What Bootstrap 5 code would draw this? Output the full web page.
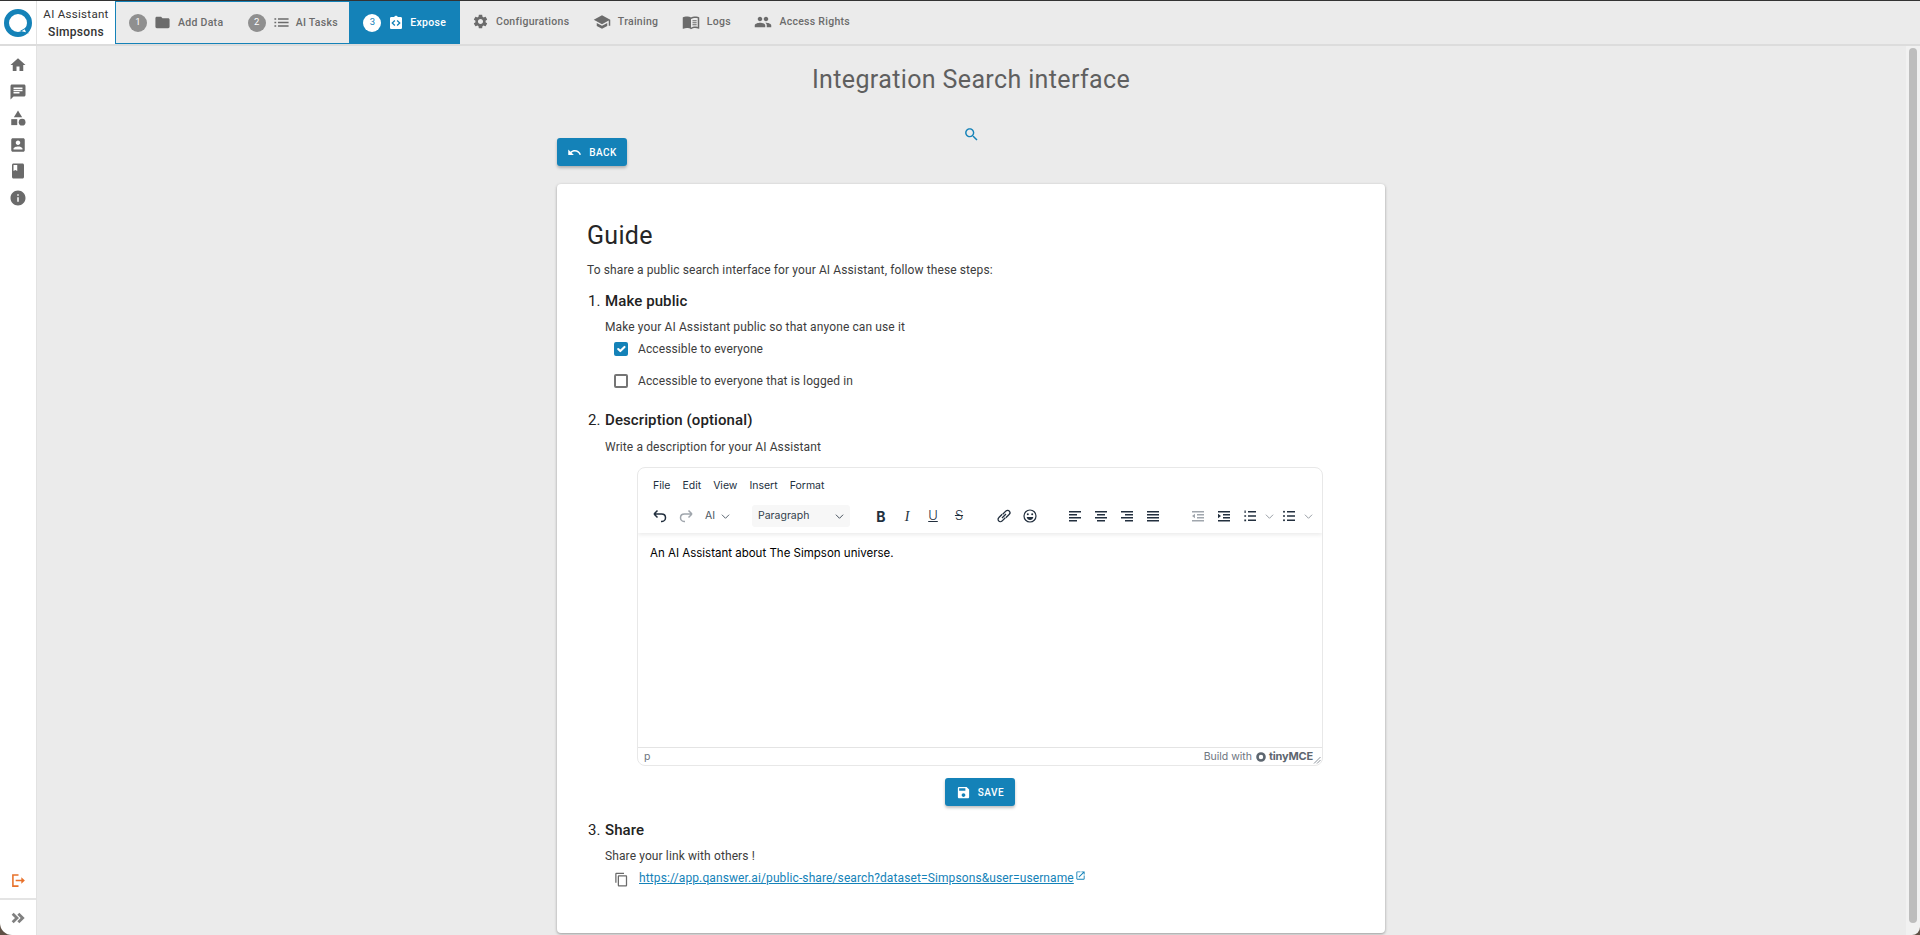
<!DOCTYPE html>
<html lang="en">
<head>
<meta charset="UTF-8">
<title>Integration Search interface</title>
<link href="https://cdn.jsdelivr.net/npm/bootstrap@5.3.2/dist/css/bootstrap.min.css" rel="stylesheet">
<style>
    html, body { height: 100%; overflow: hidden; }
    body { background: #ebebeb; font-family: Roboto, "Liberation Sans", sans-serif; color: #2b2b2b; font-size: 12px; letter-spacing: .11px; }
    .shell { height: 935px; background: #ebebeb; border-top: 1px solid #333; }
    svg { fill: currentColor; flex: none; display: block; }

    .topbar { height: 45px; border-bottom: 2px solid #dcdcdc; background: #ebebeb; color: #6b6b6b; font-size: 10.5px; font-weight: 500; letter-spacing: .28px; }
    .logo-box { width: 37px; background: #fff; border-right: 1px solid #e2e2e2; }
    .name-box { width: 78px; background: #fff; font-size: 11.5px; font-weight: 400; line-height: 18px; color: #333; letter-spacing: .3px; }
    .name-box b { font-weight: 500; font-size: 12px; }
    .stepper { width: 345px; border: 1px solid #1482b8; }
    .step-num { width: 18px; height: 18px; border-radius: 50%; background: #8f8f8f; color: #fff; font-size: 9.5px; font-weight: 400; letter-spacing: 0; }
    .step-a { padding-left: 13px; width: 118px; gap: 7px; }
    .step-b { padding-left: 14px; width: 116px; gap: 6px; }
    .step-b svg { margin-left: 1px; }
    .step-on { width: 111px; padding-left: 14px; gap: 6.5px; background: #1482b8; color: #fff; margin: -1px -1px -1px 0; }
    .step-on .step-num { background: #fff; color: #1482b8; }
    .top-link { gap: 7px; padding-bottom: 2px; }
    .links-box { padding-left: 12px; gap: 23.5px; }

    .side-wrap { background: #5f5045; }
    .sidebar { width: 37px; height: 100%; background: #fff; border-right: 1px solid #e2e2e2; color: #6a6a6a; border-bottom-left-radius: 12px; }
    .side-top { padding-top: 10px; gap: 8.5px; }
    .logout-row { height: 37px; padding-top: 1px; color: #e8712a; }
    .side-foot { height: 37px; border-top: 2px solid #e4e4e4; color: #808080; }

    .main-pane { overflow: hidden; background: #ebebeb; padding-right: 1px; }
    .bar-track { width: 14px; height: 100%; background: #f1f1f1; padding: 2px 3px 12px 3px; border-bottom-right-radius: 8px; }
    .bar-thumb { height: 100%; background: #bdbdbd; border-radius: 4px; }
    .page-title { font-size: 25px; font-weight: 400; line-height: 32px; color: #5f5f5f; letter-spacing: .37px; padding-top: 18px; margin: 0; text-align: center; }
    .search-row { color: #1482b8; height: 20px; margin-top: 30px; }
    .page-col { width: 828px; }
    .act-btn { background: #1482b8; color: #fff; border: 0; border-radius: 3px; height: 28px; font-size: 10px; font-weight: 500; letter-spacing: .5px; box-shadow: 0 2px 3px rgba(0,0,0,.25); padding: 0; gap: 7px; }
    .act-btn:hover { background: #1482b8; color: #fff; }
    .back-btn { width: 70px; margin-top: -8px; }
    .save-btn { width: 70px; }
    .save-row { margin: 12px 0 0 49px; width: 686px; }
    .guide-box { margin-top: 18px; background: #fff; border-radius: 4px; box-shadow: 0 1px 3px rgba(0,0,0,.35); padding: 34px 30px 0; height: 749px; }
    .guide-title { font-size: 25px; line-height: 36px; font-weight: 400; color: #262626; letter-spacing: .3px; margin: 0; }
    .guide-intro { margin: 7px 0 0; line-height: 18px; color: #3c3c3c; }
    .guide-steps { list-style: none; margin: 0; padding: 0 0 0 1px; }
    .step-one { margin-top: 12px; }
    .step-two { margin-top: 20px; }
    .step-three { margin-top: 14px; }
    .step-head { font-size: 15px; line-height: 20px; font-weight: 400; margin: 0; color: #222; letter-spacing: .1px; }
    .step-head b { font-weight: 500; }
    .step-head span { display: inline-block; width: 17px; }
    .step-text { padding-left: 17px; line-height: 18px; margin: 7px 0 0; color: #3c3c3c; }
    .step-two .step-text { margin-top: 8px; }
    .opt-row { padding-left: 26px; gap: 10px; line-height: 18px; color: #3c3c3c; }
    .opt-gap { margin-top: 14px; }
    .form-check-input.opt-box { width: 14px; height: 14px; margin: 0; border: 2px solid #757575; border-radius: 2px; }
    .form-check-input.opt-box:checked { background-color: #1482b8; border-color: #1482b8; background-origin: border-box; background-size: 14px; }

    .editor { margin: 11px 0 0 49px; width: 686px; height: 299px; border: 1px solid #e8e8e8; border-radius: 8px; font-family: Inter, "Liberation Sans", sans-serif; letter-spacing: 0; color: #222f3e; overflow: hidden; }
    .ed-head { box-shadow: 0 2px 4px rgba(0,0,0,.08); height: 65px; position: relative; }
    .ed-menu { padding: 9px 0 0 15px; height: 34px; font-size: 10.5px; gap: 12px; line-height: 18px; }
    .ed-tools { height: 29px; padding-left: 9px; padding-bottom: 1px; font-size: 10.5px; }
    .tool { width: 26px; height: 22px; color: #222f3e; font-size: 14px; }
    .tool-i { font-family: "Liberation Serif", serif; font-style: italic; }
    .tool-u, .tool-s { font-size: 13px; font-weight: 300; }
    .tool-off { color: #a0a6ad; }
    .tool-sm { width: 13px; color: #8d949c; }
    .ed-ai { width: 40px; gap: 6px; padding-left: 6px; color: #4a5561; }
    .ed-block { width: 98px; height: 22px; margin-left: 13px; margin-right: 18px; background: #f7f7f7; border-radius: 3px; padding: 0 6px; color: #333f4c; }
    .ed-gap { width: 19px; }
    .ed-body { flex: 1; padding: 11px 12px; font-size: 11.5px; line-height: 18px; color: #000; }
    .ed-foot { height: 18px; border-top: 1px solid #e4e4e4; color: #6d7580; font-size: 10.5px; padding: 0 9px 0 6px; position: relative; }
    .tiny-mark { font-size: 11px; font-weight: 700; color: #5d6670; letter-spacing: -.2px; margin-left: -1px; }
    .grip { position: absolute; right: 1px; bottom: 1px; }
    .share-row { padding-left: 26px; line-height: 18px; gap: 10px; margin-top: 4px; }
    .share-row a { color: #1482b8; }
    .copy-ic { color: #6a6a6a; margin-top: 3px; }
    .ext-ic { margin-left: 1px; margin-top: 1px; color: #1482b8; }
</style>
</head>
<body>
<svg width="0" height="0" class="position-absolute">
    <defs>
        <symbol id="i-home" viewBox="0 0 24 24"><path d="M10 20v-6h4v6h5v-8h3L12 3 2 12h3v8z"/></symbol>
        <symbol id="i-chat" viewBox="0 0 24 24"><path d="M20 2H4c-1.1 0-1.99.9-1.99 2L2 22l4-4h14c1.1 0 2-.9 2-2V4c0-1.1-.9-2-2-2zM6 9h12v2H6V9zm8 5H6v-2h8v2zm4-6H6V6h12v2z"/></symbol>
        <symbol id="i-cat" viewBox="0 0 24 24"><path d="M12 2l-5.5 9h11z"/><circle cx="17.5" cy="17.5" r="4.5"/><path d="M3 13.5h8v8H3z"/></symbol>
        <symbol id="i-acc" viewBox="0 0 24 24"><path d="M3 5v14c0 1.1.89 2 2 2h14c1.1 0 2-.9 2-2V5c0-1.1-.9-2-2-2H5c-1.11 0-2 .9-2 2zm12 4c0 1.66-1.34 3-3 3s-3-1.34-3-3 1.34-3 3-3 3 1.34 3 3zm-9 8c0-2 4-3.1 6-3.1s6 1.1 6 3.1v1H6v-1z"/></symbol>
        <symbol id="i-book" viewBox="0 0 24 24"><path d="M18 2H6c-1.1 0-2 .9-2 2v16c0 1.1.9 2 2 2h12c1.1 0 2-.9 2-2V4c0-1.1-.9-2-2-2zM6 4h5v8l-2.5-1.5L6 12V4z"/></symbol>
        <symbol id="i-info" viewBox="0 0 24 24"><path d="M12 2C6.48 2 2 6.48 2 12s4.48 10 10 10 10-4.48 10-10S17.52 2 12 2zm1 15h-2v-6h2v6zm0-8h-2V7h2v2z"/></symbol>
        <symbol id="i-folder" viewBox="0 0 24 24"><path d="M10 4H4c-1.1 0-1.99.9-1.99 2L2 18c0 1.1.9 2 2 2h16c1.1 0 2-.9 2-2V8c0-1.1-.9-2-2-2h-8l-2-2z"/></symbol>
        <symbol id="i-list" viewBox="0 0 24 24"><path d="M2 13h2.500v-2H2v2zm0 5h2.500v-2H2v2zm0-10h2.500V6H2v2zm5 5h15v-2H7v2zm0 5h15v-2H7v2zM7 6v2h15V6H7z"/></symbol>
        <symbol id="i-code" viewBox="0 0 24 24"><path fill-rule="evenodd" d="M19 3h-4.18C14.4 1.84 13.3 1 12 1s-2.4.84-2.82 2H5c-1.1 0-2 .9-2 2v14c0 1.1.9 2 2 2h14c1.1 0 2-.9 2-2V5c0-1.1-.9-2-2-2zm-8 12.17-1.41 1.41L5 12l4.59-4.59L11 8.83 7.83 12 11 15.17zm3.41 1.41L13 15.17 16.17 12 13 8.83l1.41-1.42L19 12l-4.59 4.58z"/></symbol>
        <symbol id="i-gear" viewBox="0 0 24 24"><path d="M19.14 12.94c.04-.3.06-.61.06-.94 0-.32-.02-.64-.07-.94l2.03-1.58c.18-.14.23-.41.12-.61l-1.92-3.32c-.12-.22-.37-.29-.59-.22l-2.39.96c-.5-.38-1.03-.7-1.62-.94l-.36-2.54c-.04-.24-.24-.41-.48-.41h-3.84c-.24 0-.43.17-.47.41l-.36 2.54c-.59.24-1.13.57-1.62.94l-2.39-.96c-.22-.08-.47 0-.59.22L2.74 8.87c-.12.21-.08.47.12.61l2.03 1.58c-.05.3-.09.63-.09.94s.02.64.07.94l-2.03 1.58c-.18.14-.23.41-.12.61l1.92 3.32c.12.22.37.29.59.22l2.39-.96c.5.38 1.03.7 1.62.94l.36 2.54c.05.24.24.41.48.41h3.84c.24 0 .44-.17.47-.41l.36-2.54c.59-.24 1.13-.56 1.62-.94l2.39.96c.22.08.47 0 .59-.22l1.92-3.32c.12-.22.07-.47-.12-.61l-2.01-1.58zM12 15.6c-1.98 0-3.6-1.62-3.6-3.6s1.62-3.6 3.6-3.6 3.6 1.62 3.6 3.6-1.62 3.6-3.6 3.6z"/></symbol>
        <symbol id="i-school" viewBox="0 0 24 24"><path d="M5 13.18v4L12 21l7-3.82v-4L12 17l-7-3.82zM12 3L1 9l11 6 9-4.91V17h2V9L12 3z"/></symbol>
        <symbol id="i-manual" viewBox="0 0 24 24"><path d="M21 5c-1.11-.35-2.33-.5-3.5-.5-1.95 0-4.05.4-5.5 1.5-1.45-1.1-3.55-1.5-5.5-1.5S2.45 4.9 1 6v14.65c0 .25.25.5.5.5.1 0 .15-.05.25-.05C3.1 20.45 5.05 20 6.5 20c1.95 0 4.05.4 5.5 1.5 1.35-.85 3.8-1.5 5.5-1.5 1.65 0 3.35.3 4.75 1.05.1.05.15.05.25.05.25 0 .5-.25.5-.5V6c-.6-.45-1.25-.75-2-1zm0 13.5c-1.1-.35-2.3-.5-3.5-.5-1.7 0-4.15.65-5.5 1.5V8c1.35-.85 3.8-1.5 5.5-1.5 1.2 0 2.4.15 3.5.5v11.5z"/><path d="M14 9.5h5.5V11H14zM14 12.2h5.5v1.5H14zM14 14.9h5.5v1.5H14z"/></symbol>
        <symbol id="i-people" viewBox="0 0 24 24"><path d="M16 11c1.66 0 2.99-1.34 2.99-3S17.66 5 16 5c-1.66 0-3 1.34-3 3s1.34 3 3 3zm-8 0c1.66 0 2.99-1.34 2.99-3S9.66 5 8 5C6.34 5 5 6.34 5 8s1.34 3 3 3zm0 2c-2.33 0-7 1.17-7 3.5V19h14v-2.5c0-2.33-4.67-3.5-7-3.5zm8 0c-.29 0-.62.02-.97.05 1.16.84 1.97 1.97 1.97 3.45V19h6v-2.5c0-2.33-4.67-3.5-7-3.5z"/></symbol>
        <symbol id="i-undo" viewBox="0 0 24 24"><path d="M12.5 8c-2.65 0-5.05.99-6.9 2.6L2 7v9h9l-3.62-3.62c1.39-1.16 3.16-1.88 5.12-1.88 3.54 0 6.55 2.31 7.6 5.5l2.37-.78C21.08 11.03 17.15 8 12.5 8z"/></symbol>
        <symbol id="i-save" viewBox="0 0 24 24"><path d="M17 3H5c-1.11 0-2 .9-2 2v14c0 1.1.89 2 2 2h14c1.1 0 2-.9 2-2V7l-4-4zm-5 16c-1.66 0-3-1.34-3-3s1.34-3 3-3 3 1.34 3 3-1.34 3-3 3zm3-10H5V5h10v4z"/></symbol>
        <symbol id="i-search" viewBox="0 0 24 24"><path d="M15.5 14h-.79l-.28-.27C15.41 12.59 16 11.11 16 9.5 16 5.91 13.09 3 9.5 3S3 5.91 3 9.5 5.91 16 9.5 16c1.61 0 3.09-.59 4.23-1.57l.27.28v.79l5 4.99L20.49 19l-4.99-5zm-6 0C7.01 14 5 11.99 5 9.5S7.01 5 9.5 5 14 7.01 14 9.5 11.99 14 9.5 14z"/></symbol>
        <symbol id="i-copy" viewBox="0 0 24 24"><path d="M16 1H4c-1.1 0-2 .9-2 2v14h2V3h12V1zm3 4H8c-1.1 0-2 .9-2 2v14c0 1.1.9 2 2 2h11c1.1 0 2-.9 2-2V7c0-1.1-.9-2-2-2zm0 16H8V7h11v14z"/></symbol>
        <symbol id="i-ext" viewBox="0 0 24 24"><path d="M19 19H5V5h7V3H5c-1.11 0-2 .9-2 2v14c0 1.1.89 2 2 2h14c1.1 0 2-.9 2-2v-7h-2v7zM14 3v2h3.59l-9.83 9.83 1.41 1.41L19 6.41V10h2V3h-7z"/></symbol>
        <symbol id="i-dbl" viewBox="0 0 24 24"><path d="M5.500 4 2.500 7l5 5-5 5 3 3 8-8zM14 4l-3 3 5 5-5 5 3 3 8-8z"/></symbol>
        <symbol id="i-logout" viewBox="0 0 24 24"><path d="M3 3h9v2.200H5.200v13.600H12V21H3z"/><path d="M8 11h8V7.500l5 4.500-5 4.500V13H8z"/></symbol>
        <symbol id="i-chev" viewBox="0 0 10 10"><path d="M1 3l4 4 4-4" fill="none" stroke="currentColor" stroke-width="1"/></symbol>
        <symbol id="t-redo" viewBox="0 0 16 16"><path d="M14 6H6.500C4 6 2.500 7.700 2.500 9.700S4 13.500 6 13.500h1M14 6l-3.500-3.500M14 6l-3.500 3.500" fill="none" stroke="currentColor" stroke-width="1.500"/></symbol>
        <symbol id="t-undo" viewBox="0 0 16 16"><path d="M2 6h7.500C12 6 13.500 7.700 13.500 9.700S12 13.500 10 13.500H9M2 6l3.500-3.500M2 6l3.500 3.500" fill="none" stroke="currentColor" stroke-width="1.500"/></symbol>
        <symbol id="t-link" viewBox="0 0 16 16"><g fill="none" stroke="currentColor" stroke-width="1.300"><path d="M6.200 6.200L2.900 9.500a2.200 2.200 0 0 0 3.100 3.600l3.300-3.300"/><path d="M9.800 9.800l3.300-3.300A2.200 2.200 0 0 0 10 2.900L6.700 6.200"/><path d="M6 10l4-4"/></g></symbol>
        <symbol id="t-emo" viewBox="0 0 16 16"><circle cx="8" cy="8" r="6" fill="none" stroke="currentColor" stroke-width="1.200"/><circle cx="5.800" cy="6.300" r="1"/><circle cx="10.200" cy="6.300" r="1"/><path d="M4.700 9h6.600c-.3 2-1.600 3-3.300 3s-3-1-3.300-3z"/></symbol>
        <symbol id="t-left" viewBox="0 0 16 16"><path d="M2 3h12v1.400H2zM2 6h8v1.400H2zM2 9h12v1.400H2zM2 12h8v1.400H2z"/></symbol>
        <symbol id="t-center" viewBox="0 0 16 16"><path d="M2 3h12v1.400H2zM4 6h8v1.400H4zM2 9h12v1.400H2zM4 12h8v1.400H4z"/></symbol>
        <symbol id="t-right" viewBox="0 0 16 16"><path d="M2 3h12v1.400H2zM6 6h8v1.400H6zM2 9h12v1.400H2zM6 12h8v1.400H6z"/></symbol>
        <symbol id="t-just" viewBox="0 0 16 16"><path d="M2 3h12v1.400H2zM2 6h12v1.400H2zM2 9h12v1.400H2zM2 12h12v1.400H2z"/></symbol>
        <symbol id="t-out" viewBox="0 0 16 16"><path d="M2 3h12v1.400H2zM7 6h7v1.400H7zM7 9h7v1.400H7zM2 12h12v1.400H2zM5 5.700v4.600L2 8z"/></symbol>
        <symbol id="t-in" viewBox="0 0 16 16"><path d="M2 3h12v1.400H2zM7 6h7v1.400H7zM7 9h7v1.400H7zM2 12h12v1.400H2zM2 5.700v4.600L5 8z"/></symbol>
        <symbol id="t-num" viewBox="0 0 16 16"><path d="M6 3h8v1.400H6zM6 7.300h8v1.400H6zM6 11.600h8V13H6zM2.500 2.500h1.200v2.400H2.500zM2.300 7.200h1.800v1.600H2.300zM2.300 11.400h1.800v1.800H2.300z"/></symbol>
        <symbol id="t-bul" viewBox="0 0 16 16"><path d="M6 3h8v1.400H6zM6 7.300h8v1.400H6zM6 11.600h8V13H6z"/><circle cx="3" cy="3.700" r="1"/><circle cx="3" cy="8" r="1"/><circle cx="3" cy="12.300" r="1"/></symbol>
    </defs>
</svg>

<div class="shell d-flex flex-column">
    <header class="topbar d-flex flex-shrink-0">
        <div class="logo-box d-flex align-items-center justify-content-center">
            <svg width="30" height="30" viewBox="0 0 30 30">
                <circle cx="15" cy="15" r="11.500" fill="none" stroke="#1482b8" stroke-width="5"/>
                <path d="M17 23l8.500 2.500-2.500-6z" fill="#1482b8"/>
                <path d="M18.500 23.200l4.500 1-1.300-3z" fill="#fff"/>
            </svg>
        </div>
        <div class="name-box d-flex flex-column align-items-center justify-content-center">
            <span>AI Assistant</span>
            <b>Simpsons</b>
        </div>
        <div class="stepper d-flex">
            <div class="step-a d-flex align-items-center">
                <span class="step-num d-flex align-items-center justify-content-center">1</span>
                <svg width="17" height="17"><use href="#i-folder"/></svg>
                <span>Add Data</span>
            </div>
            <div class="step-b d-flex align-items-center">
                <span class="step-num d-flex align-items-center justify-content-center">2</span>
                <svg width="17" height="17"><use href="#i-list"/></svg>
                <span>AI Tasks</span>
            </div>
            <div class="step-on d-flex align-items-center">
                <span class="step-num d-flex align-items-center justify-content-center">3</span>
                <svg width="16" height="16"><use href="#i-code"/></svg>
                <span>Expose</span>
            </div>
        </div>
        <div class="links-box d-flex align-items-center">
            <div class="top-link d-flex align-items-center"><svg width="17" height="17"><use href="#i-gear"/></svg><span>Configurations</span></div>
            <div class="top-link d-flex align-items-center"><svg width="18" height="18"><use href="#i-school"/></svg><span>Training</span></div>
            <div class="top-link d-flex align-items-center"><svg width="18" height="18"><use href="#i-manual"/></svg><span>Logs</span></div>
            <div class="top-link d-flex align-items-center"><svg width="18" height="18"><use href="#i-people"/></svg><span>Access Rights</span></div>
        </div>
    </header>

    <div class="d-flex flex-grow-1 overflow-hidden">
        <div class="side-wrap flex-shrink-0">
            <aside class="sidebar d-flex flex-column">
                <div class="side-top d-flex flex-column align-items-center flex-grow-1">
                    <svg width="18" height="18"><use href="#i-home"/></svg>
                    <svg width="18" height="18"><use href="#i-chat"/></svg>
                    <svg width="18" height="18"><use href="#i-cat"/></svg>
                    <svg width="18" height="18"><use href="#i-acc"/></svg>
                    <svg width="18" height="18"><use href="#i-book"/></svg>
                    <svg width="18" height="18"><use href="#i-info"/></svg>
                </div>
                <div class="logout-row d-flex align-items-center justify-content-center"><svg width="17" height="17"><use href="#i-logout"/></svg></div>
                <div class="side-foot d-flex align-items-center justify-content-center"><svg width="16" height="16"><use href="#i-dbl"/></svg></div>
            </aside>
        </div>

        <main class="main-pane flex-grow-1">
            <h1 class="page-title">Integration Search interface</h1>
            <div class="search-row d-flex justify-content-center"><svg width="17" height="17"><use href="#i-search"/></svg></div>
            <div class="page-col mx-auto">
                <button class="act-btn back-btn btn d-flex align-items-center justify-content-center"><svg width="15" height="15"><use href="#i-undo"/></svg>BACK</button>
                <section class="guide-box">
                    <h2 class="guide-title">Guide</h2>
                    <p class="guide-intro">To share a public search interface for your AI Assistant, follow these steps:</p>
                    <ol class="guide-steps">
                        <li class="step-one">
                            <h3 class="step-head"><span>1.</span><b>Make public</b></h3>
                            <p class="step-text">Make your AI Assistant public so that anyone can use it</p>
                            <label class="opt-row d-flex align-items-center mt-1"><input class="form-check-input opt-box" type="checkbox" checked><span>Accessible to everyone</span></label>
                            <label class="opt-row opt-gap d-flex align-items-center"><input class="form-check-input opt-box" type="checkbox"><span>Accessible to everyone that is logged in</span></label>
                        </li>
                        <li class="step-two">
                            <h3 class="step-head"><span>2.</span><b>Description (optional)</b></h3>
                            <p class="step-text">Write a description for your AI Assistant</p>
                            <div class="editor d-flex flex-column">
                                <div class="ed-head flex-shrink-0">
                                    <div class="ed-menu d-flex"><span>File</span><span>Edit</span><span>View</span><span>Insert</span><span>Format</span></div>
                                    <div class="ed-tools d-flex align-items-center">
                                        <span class="tool d-flex align-items-center justify-content-center"><svg width="16" height="16"><use href="#t-undo"/></svg></span>
                                        <span class="tool tool-off d-flex align-items-center justify-content-center"><svg width="16" height="16"><use href="#t-redo"/></svg></span>
                                        <span class="ed-ai d-flex align-items-center">AI<svg width="9" height="9"><use href="#i-chev"/></svg></span>
                                        <span class="ed-block d-flex align-items-center justify-content-between">Paragraph<svg width="9" height="9"><use href="#i-chev"/></svg></span>
                                        <span class="tool d-flex align-items-center justify-content-center fw-bold">B</span>
                                        <span class="tool tool-i d-flex align-items-center justify-content-center">I</span>
                                        <span class="tool tool-u d-flex align-items-center justify-content-center text-decoration-underline">U</span>
                                        <span class="tool tool-s d-flex align-items-center justify-content-center text-decoration-line-through">S</span>
                                        <span class="ed-gap"></span>
                                        <span class="tool d-flex align-items-center justify-content-center"><svg width="16" height="16"><use href="#t-link"/></svg></span>
                                        <span class="tool d-flex align-items-center justify-content-center"><svg width="16" height="16"><use href="#t-emo"/></svg></span>
                                        <span class="ed-gap"></span>
                                        <span class="tool d-flex align-items-center justify-content-center"><svg width="16" height="16"><use href="#t-left"/></svg></span>
                                        <span class="tool d-flex align-items-center justify-content-center"><svg width="16" height="16"><use href="#t-center"/></svg></span>
                                        <span class="tool d-flex align-items-center justify-content-center"><svg width="16" height="16"><use href="#t-right"/></svg></span>
                                        <span class="tool d-flex align-items-center justify-content-center"><svg width="16" height="16"><use href="#t-just"/></svg></span>
                                        <span class="ed-gap"></span>
                                        <span class="tool tool-off d-flex align-items-center justify-content-center"><svg width="16" height="16"><use href="#t-out"/></svg></span>
                                        <span class="tool d-flex align-items-center justify-content-center"><svg width="16" height="16"><use href="#t-in"/></svg></span>
                                        <span class="tool d-flex align-items-center justify-content-center"><svg width="16" height="16"><use href="#t-num"/></svg></span>
                                        <span class="tool-sm d-flex align-items-center justify-content-center"><svg width="9" height="9"><use href="#i-chev"/></svg></span>
                                        <span class="tool d-flex align-items-center justify-content-center"><svg width="16" height="16"><use href="#t-bul"/></svg></span>
                                        <span class="tool-sm d-flex align-items-center justify-content-center"><svg width="9" height="9"><use href="#i-chev"/></svg></span>
                                    </div>
                                </div>
                                <div class="ed-body">An AI Assistant about The Simpson universe.</div>
                                <div class="ed-foot d-flex align-items-center justify-content-between flex-shrink-0">
                                    <span>p</span>
                                    <span class="d-flex align-items-center gap-1">Build with
                                        <svg width="10" height="10" viewBox="0 0 10 10"><circle cx="5" cy="5" r="3.500" fill="none" stroke="#5d6670" stroke-width="2.600"/></svg>
                                        <span class="tiny-mark">tinyMCE</span>
                                    </span>
                                    <svg class="grip" width="8" height="8" viewBox="0 0 8 8"><path d="M1 7.500L7.500 1M4 7.500L7.500 4" stroke="#8d949c" fill="none"/></svg>
                                </div>
                            </div>
                            <div class="save-row d-flex justify-content-center">
                                <button class="act-btn save-btn btn d-flex align-items-center justify-content-center"><svg width="15" height="15"><use href="#i-save"/></svg>SAVE</button>
                            </div>
                        </li>
                        <li class="step-three">
                            <h3 class="step-head"><span>3.</span><b>Share</b></h3>
                            <p class="step-text">Share your link with others !</p>
                            <div class="share-row d-flex">
                                <svg class="copy-ic" width="15" height="15"><use href="#i-copy"/></svg>
                                <span class="d-flex"><a href="#">https://app.qanswer.ai/public-share/search?dataset=Simpsons&amp;user=username</a><svg class="ext-ic" width="11" height="11"><use href="#i-ext"/></svg></span>
                            </div>
                        </li>
                    </ol>
                </section>
            </div>
        </main>
        <div class="side-wrap flex-shrink-0"><div class="bar-track"><div class="bar-thumb"></div></div></div>
    </div>
</div>
<script src="https://cdn.jsdelivr.net/npm/bootstrap@5.3.2/dist/js/bootstrap.bundle.min.js"></script>
</body>
</html>
